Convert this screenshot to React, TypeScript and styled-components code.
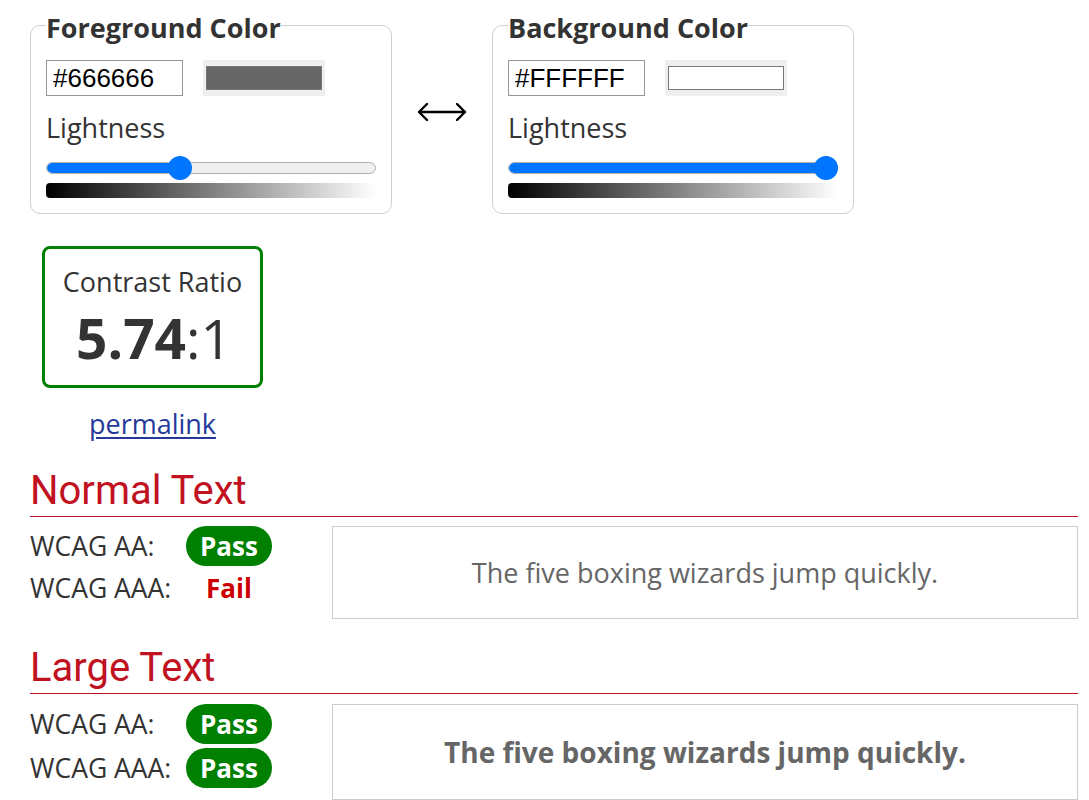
import React from "react";
import styled, { createGlobalStyle } from "styled-components";

const Global = createGlobalStyle`
  html, body { margin: 0; padding: 0; background: #fff; }
  body { font-family: "Open Sans", "Noto Sans", sans-serif; color: #333; }
  * { box-sizing: border-box; }
`;

const Page = styled.div`
  width: 1089px;
  padding: 9px 11px 0 30px;
`;

const TopRow = styled.div`
  display: flex;
  align-items: center;
`;

const Picker = styled.fieldset`
  width: 362px;
  margin: 0;
  padding: 0 15px 15px 15px;
  border: 1px solid #cfcfcf;
  border-radius: 10px;
  min-width: 0;
`;

const Legend = styled.legend`
  padding: 4px 0 0 0;
  margin: 0;
  font-size: 27px;
  line-height: 29px;
  font-weight: 700;
  color: #333;
`;

const InputRow = styled.div`
  display: flex;
  gap: 20px;
  margin-top: 18px;
`;

const HexInput = styled.input`
  width: 137px;
  height: 36px;
  border: 1px solid #959595;
  padding: 0 0 0 6px;
  font-family: "Liberation Sans", Arial, sans-serif;
  font-size: 26px;
  color: #000;
  background: #fff;
`;

const Swatch = styled.div`
  width: 122px;
  height: 36px;
  background: #efefef;
  padding: 6px 3px;
  display: flex;
`;

const SwatchColor = styled.div<{ $c: string }>`
  flex: 1;
  border: 1px solid #777;
  background: ${(p) => p.$c};
`;

const Label = styled.div`
  margin-top: 15px;
  font-size: 27px;
  line-height: 33px;
  color: #333;
`;

const Slider = styled.div`
  position: relative;
  margin-top: 12px;
  height: 24px;
  display: flex;
  align-items: center;
`;

const Track = styled.div`
  position: relative;
  width: 100%;
  height: 12px;
  border-radius: 6px;
  background: #efefef;
  border: 1px solid #b2b2b2;
  overflow: hidden;
`;

const Fill = styled.div`
  height: 100%;
  background: #0075ff;
  border-radius: 6px 0 0 6px;
`;

const Thumb = styled.div`
  position: absolute;
  top: 0;
  width: 24px;
  height: 24px;
  border-radius: 50%;
  background: #0075ff;
`;

const Gradient = styled.div`
  margin-top: 3px;
  height: 15px;
  border-radius: 4px 0 0 4px;
  background: linear-gradient(to right, #000, #fff);
`;

const SwapArea = styled.div`
  width: 100px;
  display: flex;
  justify-content: center;
`;

const ContrastWrap = styled.div`
  width: 221px;
  margin: 32px 0 0 12px;
  display: flex;
  flex-direction: column;
  align-items: center;
`;

const ContrastBox = styled.div`
  width: 221px;
  height: 142px;
  border: 3px solid #008000;
  border-radius: 8px;
  padding-top: 15px;
  display: flex;
  flex-direction: column;
  align-items: center;
`;

const ContrastTitle = styled.div`
  font-size: 27px;
  line-height: 36px;
  color: #333;
`;

const Ratio = styled.div`
  margin-top: 6px;
  padding-left: 3px;
  font-size: 55px;
  line-height: 64px;
  color: #333;
`;

const RatioBold = styled.span`
  font-weight: 700;
`;

const Permalink = styled.a`
  margin-top: 18px;
  font-size: 27px;
  line-height: 36px;
  color: #26399a;
  text-decoration: underline;
  text-underline-offset: 3px;
`;

const SectionHeading = styled.h2<{ $mt: number }>`
  margin: ${(p) => p.$mt}px 0 0 0;
  padding: 0 0 2px 0;
  font-family: Roboto, "Liberation Sans", sans-serif;
  font-weight: 400;
  font-size: 40px;
  line-height: 46px;
  color: #c1121f;
  border-bottom: 1px solid #c1121f;
`;

const ResultGrid = styled.div<{ $mt: number }>`
  display: flex;
  margin-top: ${(p) => p.$mt}px;
`;

const Rows = styled.div<{ $gap: number; $pt: number }>`
  width: 302px;
  display: flex;
  flex-direction: column;
  gap: ${(p) => p.$gap}px;
  padding-top: ${(p) => p.$pt}px;
`;

const Row = styled.div`
  display: flex;
  align-items: center;
  height: 40px;
`;

const RowLabel = styled.div`
  width: 156px;
  font-size: 26.5px;
  color: #333;
`;

const Badge = styled.div<{ $pass: boolean }>`
  width: 86px;
  height: 40px;
  border-radius: 20px;
  display: flex;
  align-items: center;
  justify-content: center;
  font-size: 26px;
  font-weight: 700;
  color: ${(p) => (p.$pass ? "#fff" : "#cc0000")};
  background: ${(p) => (p.$pass ? "#008000" : "transparent")};
`;

const Sample = styled.div<{ $h: number; $bold: boolean }>`
  flex: 1;
  height: ${(p) => p.$h}px;
  border: 1px solid #cccccc;
  display: flex;
  align-items: center;
  justify-content: center;
  font-size: ${(p) => (p.$bold ? 28 : 27)}px;
  font-weight: ${(p) => (p.$bold ? 700 : 400)};
  color: #666;
`;

function ColorPicker({ title, hex, lightness }: { title: string; hex: string; lightness: number }) {
  return (
    <Picker>
      <Legend>{title}</Legend>
      <InputRow>
        <HexInput defaultValue={hex} />
        <Swatch>
          <SwatchColor $c={hex} />
        </Swatch>
      </InputRow>
      <Label>Lightness</Label>
      <Slider>
        <Track>
          <Fill style={{ width: `calc(12px + (100% - 24px) * ${lightness / 100})` }} />
        </Track>
        <Thumb style={{ left: `calc((100% - 24px) * ${lightness / 100})` }} />
      </Slider>
      <Gradient />
    </Picker>
  );
}

function Result({
  mt,
  gap,
  pt,
  h,
  bold,
  aa,
  aaa,
}: {
  mt: number;
  gap: number;
  pt: number;
  h: number;
  bold: boolean;
  aa: boolean;
  aaa: boolean;
}) {
  return (
    <ResultGrid $mt={mt}>
      <Rows $gap={gap} $pt={pt}>
        <Row>
          <RowLabel>WCAG AA:</RowLabel>
          <Badge $pass={aa}>{aa ? "Pass" : "Fail"}</Badge>
        </Row>
        <Row>
          <RowLabel>WCAG AAA:</RowLabel>
          <Badge $pass={aaa}>{aaa ? "Pass" : "Fail"}</Badge>
        </Row>
      </Rows>
      <Sample $h={h} $bold={bold}>
        The five boxing wizards jump quickly.
      </Sample>
    </ResultGrid>
  );
}

export default function App() {
  return (
    <Page>
      <Global />
      <TopRow>
        <ColorPicker title="Foreground Color" hex="#666666" lightness={40} />
        <SwapArea>
          <svg width="50" height="22" viewBox="0 0 50 22" aria-label="swap">
            <path
              d="M2 11 H48 M10 3 L2 11 L10 19 M40 3 L48 11 L40 19"
              fill="none"
              stroke="#000"
              strokeWidth="2.4"
              strokeLinecap="round"
              strokeLinejoin="round"
            />
          </svg>
        </SwapArea>
        <ColorPicker title="Background Color" hex="#FFFFFF" lightness={100} />
      </TopRow>

      <ContrastWrap>
        <ContrastBox>
          <ContrastTitle>Contrast Ratio</ContrastTitle>
          <Ratio>
            <RatioBold>5.74</RatioBold>:1
          </Ratio>
        </ContrastBox>
        <Permalink href="#">permalink</Permalink>
      </ContrastWrap>

      <SectionHeading $mt={26}>Normal Text</SectionHeading>
      <Result mt={9} gap={2} pt={0} h={93} bold={false} aa={true} aaa={false} />

      <SectionHeading $mt={26}>Large Text</SectionHeading>
      <Result mt={10} gap={4} pt={0} h={96} bold={true} aa={true} aaa={true} />
    </Page>
  );
}
